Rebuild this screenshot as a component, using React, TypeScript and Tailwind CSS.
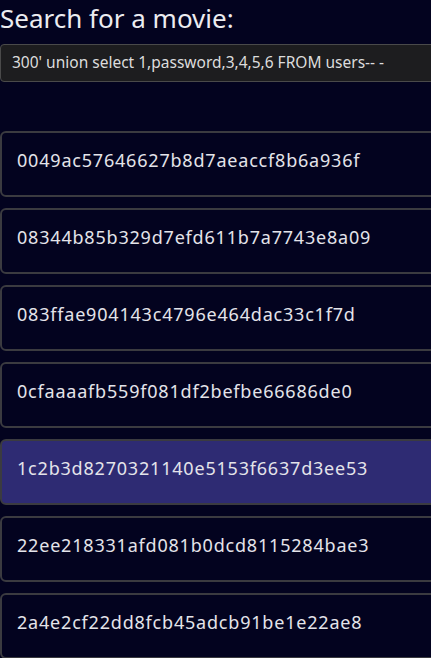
import { FC } from 'react';

const hashes = [
  '0049ac57646627b8d7aeaccf8b6a936f',
  '08344b85b329d7efd611b7a7743e8a09',
  '083ffae904143c4796e464dac33c1f7d',
  '0cfaaaafb559f081df2befbe66686de0',
  '1c2b3d8270321140e5153f6637d3ee53',
  '22ee218331afd081b0dcd8115284bae3',
  '2a4e2cf22dd8fcb45adcb91be1e22ae8',
];

const App: FC = () => {
  const selected = 4;

  return (
    <div
      className="h-[658px] w-[431px] overflow-hidden bg-[#03031f] text-[#e4e4ea]"
      style={{ fontFamily: '"Noto Sans", "Open Sans", sans-serif' }}
    >
      <h1 className="pt-[1px] text-[26px] leading-[35px] text-[#ececf0]">Search for a movie:</h1>
      <div className="mt-[8px] flex h-[38px] w-[445px] items-center rounded-[4px] border border-[#4a4a4a] bg-[#1d1d1f] px-[11px] text-[15.5px] text-[#dcdcdc]">
        300' union select 1,password,3,4,5,6 FROM users-- -
      </div>

      <div className="mt-[49px] flex w-[445px] flex-col gap-[11px]">
        {hashes.map((h, i) => (
          <div
            key={h}
            className={
              'flex h-[66px] items-start rounded-[6px] border-2 border-[#3b3b40] px-[15px] pt-[14px] text-[18px] leading-[26px] tracking-[0.8px] ' +
              (i === selected ? 'bg-[#2e2b73]' : 'bg-[#03031f]')
            }
          >
            {h}
          </div>
        ))}
      </div>
    </div>
  );
};

export default App;
